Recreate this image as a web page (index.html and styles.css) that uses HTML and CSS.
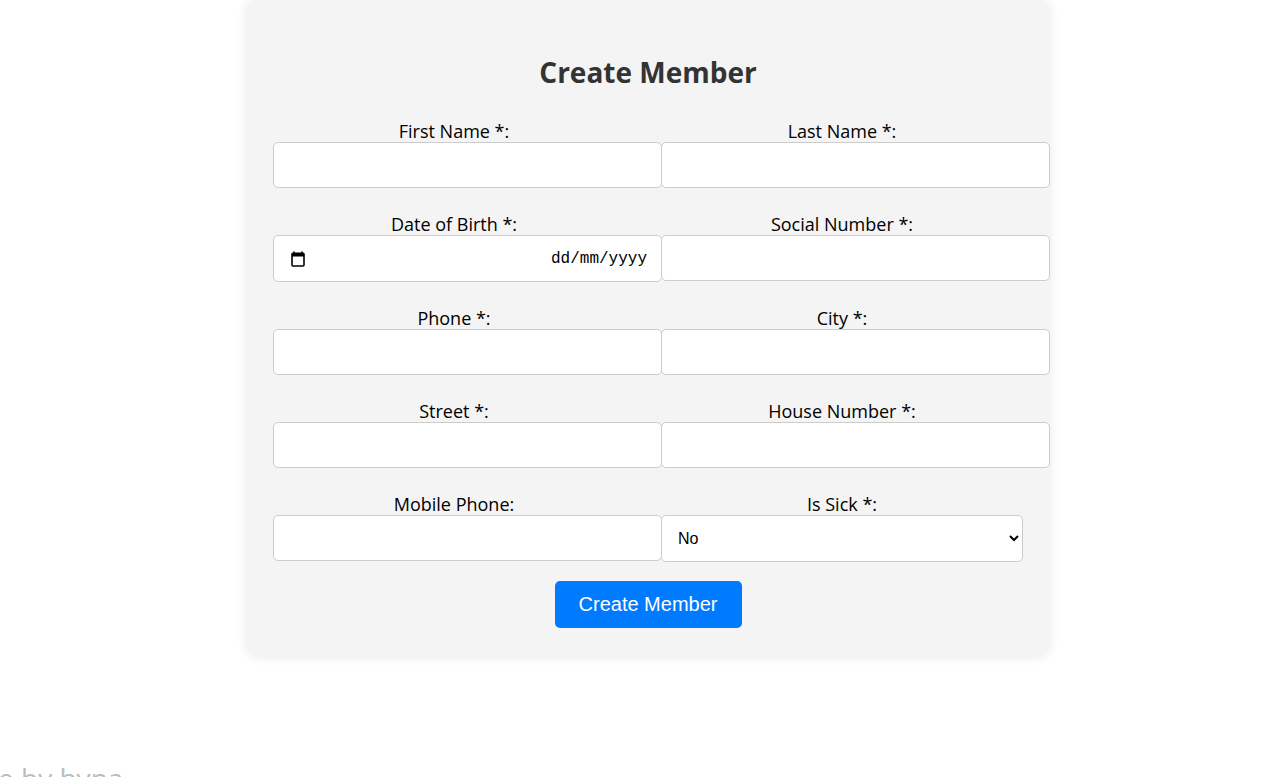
FILE: index.html
```html
<!DOCTYPE html>
<html lang="en">
<head>
<meta charset="utf-8">
<title>Create Member</title>
<link rel="stylesheet" href="styles.css">
</head>
<body>
<div class="page">
  <div class="card">
    <h2 class="title">Create Member</h2>
    <form class="form">
      <div class="field">
        <label class="label">First Name *:</label>
        <input class="input" type="text">
      </div>
      <div class="field">
        <label class="label">Last Name *:</label>
        <input class="input" type="text">
      </div>
      <div class="field">
        <label class="label">Date of Birth *:</label>
        <div class="input date">
          <svg class="cal" width="14" height="16" viewBox="0 0 14 16"><path d="M3 0.5v2M11 0.5v2" stroke="#000" stroke-width="1.6" fill="none"/><rect x="1" y="2.2" width="12" height="12.8" rx="1" fill="none" stroke="#000" stroke-width="1.6"/><rect x="1" y="2.2" width="12" height="3.3" fill="#000"/></svg>
          <span class="datetext">dd/mm/yyyy</span>
        </div>
      </div>
      <div class="field">
        <label class="label">Social Number *:</label>
        <input class="input" type="text">
      </div>
      <div class="field">
        <label class="label">Phone *:</label>
        <input class="input" type="text">
      </div>
      <div class="field">
        <label class="label">City *:</label>
        <input class="input" type="text">
      </div>
      <div class="field">
        <label class="label">Street *:</label>
        <input class="input" type="text">
      </div>
      <div class="field">
        <label class="label">House Number *:</label>
        <input class="input" type="text">
      </div>
      <div class="field">
        <label class="label">Mobile Phone:</label>
        <input class="input" type="text">
      </div>
      <div class="field">
        <label class="label">Is Sick *:</label>
        <select class="select"><option>No</option><option>Yes</option></select>
      </div>
      <div class="actions">
        <button class="btn" type="button">Create Member</button>
      </div>
    </form>
  </div>
  <div class="footer">e by hyna</div>
</div>
</body>
</html>
```
FILE: styles.css
```css
html, body {
  margin: 0;
  padding: 0;
  background: #fff;
  overflow: hidden;
}
body {
  font-family: "Open Sans", "Noto Sans", sans-serif;
  color: #000;
  height: 777px;
}
.page {
  padding-left: 10px;
  height: 777px;
  position: relative;
}
.card {
  width: 750px;
  margin: 0 auto;
  padding: 52px 26px 28px;
  background: #f4f4f4;
  border-radius: 12px;
  box-shadow: 0 0 12px rgba(0, 0, 0, 0.1);
}
.title {
  margin: 0 0 28px;
  text-align: center;
  font-size: 28px;
  line-height: 40px;
  font-weight: 700;
  color: #333;
}
.form {
  display: grid;
  grid-template-columns: 362px 362px;
  column-gap: 26px;
  row-gap: 25px;
}
.field {
  display: flex;
  flex-direction: column;
}
.label {
  display: block;
  text-align: center;
  font-size: 18px;
  line-height: 22px;
  color: #000;
}
.input {
  box-sizing: content-box;
  width: 100%;
  height: 20px;
  padding: 12px 13px 12px 12px;
  border: 1px solid #ccc;
  border-radius: 5px;
  background: #fff;
  font-size: 16px;
  margin: 0;
  outline: none;
}
.date {
  display: flex;
  align-items: center;
  justify-content: space-between;
  height: 21px;
}
.cal {
  margin-left: 5px;
}
.datetext {
  font-family: "Liberation Mono", monospace;
  font-size: 16px;
  color: #000;
  margin-right: 1px;
}
.select {
  box-sizing: border-box;
  width: 362px;
  height: 47px;
  padding: 0 12px;
  border: 1px solid #ccc;
  border-radius: 5px;
  background: #fff;
  font-family: "Liberation Sans", Arial, sans-serif;
  font-size: 16px;
  color: #000;
  margin: 0;
}
.actions {
  grid-column: 1 / -1;
  display: flex;
  justify-content: center;
  margin-top: -6px;
}
.btn {
  width: 187px;
  height: 47px;
  border: none;
  border-radius: 5px;
  background: #007bff;
  color: #fff;
  font-family: "Liberation Sans", Arial, sans-serif;
  font-size: 20px;
  cursor: pointer;
}
.footer {
  position: absolute;
  left: -2px;
  top: 759px;
  font-family: "Open Sans", sans-serif;
  font-size: 28px;
  line-height: 38px;
  color: #bbb;
  white-space: nowrap;
}
```
